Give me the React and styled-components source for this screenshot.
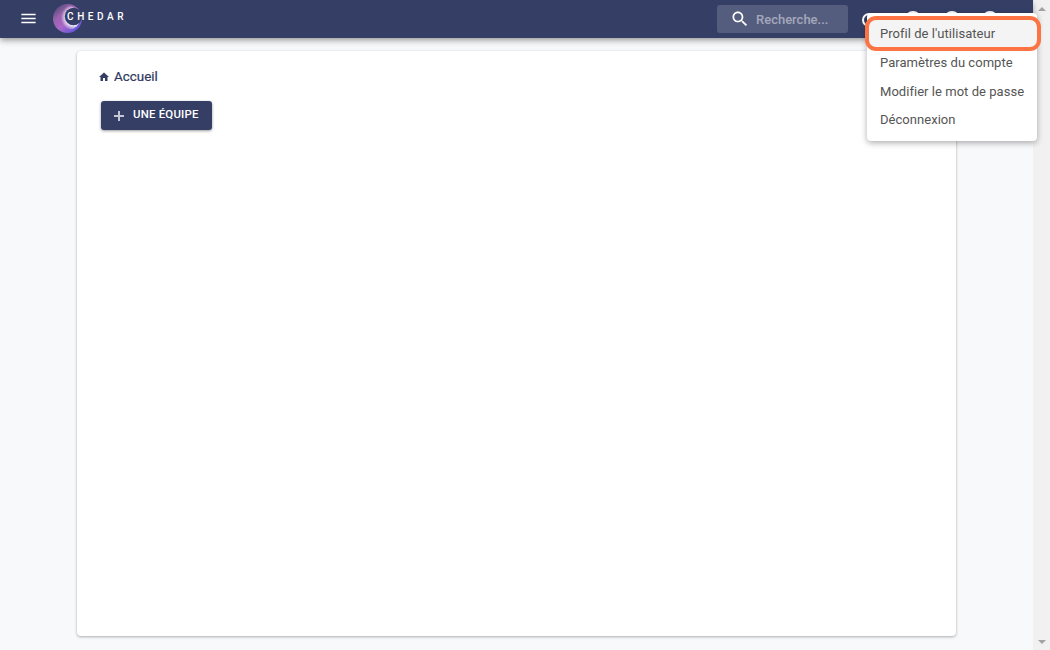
import React from 'react';
import styled, { createGlobalStyle } from 'styled-components';

const Global = createGlobalStyle`
  html, body { margin: 0; padding: 0; height: 100%; overflow: hidden; }
  body { font-family: Roboto, "Liberation Sans", sans-serif; background: #f8f9fb; }
`;

const Page = styled.div`
  position: relative;
  display: flex;
  width: 1050px;
  height: 650px;
  overflow: hidden;
`;
const Main = styled.div`
  flex: 1;
  display: flex;
  flex-direction: column;
  min-width: 0;
`;
const TopBar = styled.header`
  height: 38px;
  flex: none;
  display: flex;
  align-items: center;
  background: #353f66;
  box-shadow: 0 2px 4px -1px rgba(0,0,0,.2), 0 4px 5px 0 rgba(0,0,0,.14), 0 1px 10px 0 rgba(0,0,0,.12);
  padding: 0 0 0 19px;
  position: relative;
  z-index: 2;
`;
const Burger = styled.svg`
  width: 19px;
  height: 19px;
  fill: #fff;
  margin-right: 15px;
  margin-top: -2px;
  flex: none;
`;
const Brand = styled.div`
  display: flex;
  align-items: center;
  color: #fff;
  font-size: 10px;
  font-weight: 500;
  letter-spacing: 3.6px;
`;
const BrandName = styled.span`
  margin-left: -16px;
  margin-top: -6px;
`;
const Spacer = styled.div`flex: 1;`;
const SearchBox = styled.div`
  width: 131px;
  height: 28px;
  box-sizing: border-box;
  border-radius: 3px;
  background: rgba(255,255,255,.16);
  display: flex;
  align-items: center;
  padding-left: 13px;
  gap: 6px;
  color: #a3a8bb;
  font-size: 13px;
  font-weight: 500;
  margin-right: 14px;
`;
const SearchGlyph = styled.svg`
  width: 20px;
  height: 20px;
  fill: #fff;
  flex: none;
`;
const Round = styled.div`
  width: ${p => p.$size}px;
  height: ${p => p.$size}px;
  box-sizing: border-box;
  border: 2px solid #fff;
  border-radius: 50%;
  margin-right: ${p => p.$gap}px;
  margin-top: ${p => p.$drop || 0}px;
  flex: none;
`;
const Content = styled.main`
  flex: 1;
  padding: 13px 77px 14px;
  display: flex;
`;
const Card = styled.section`
  width: 879px;
  flex: none;
  background: #fff;
  border-radius: 4px;
  box-shadow: 0 1px 3px rgba(0,0,0,.3), 0 0 1px rgba(0,0,0,.08);
  padding: 18px 24px;
  box-sizing: border-box;
`;
const Crumb = styled.div`
  display: flex;
  align-items: center;
  gap: 4px;
  color: #2f3860;
  font-size: 13.4px;
  font-weight: 400;
  -webkit-text-stroke: .2px #2f3860;
  line-height: 16px;
  margin-left: -3px;
`;
const HomeGlyph = styled.svg`
  width: 12px;
  height: 12px;
  fill: #353f66;
  flex: none;
`;
const AddButton = styled.button`
  margin-top: 16px;
  width: 111px;
  height: 29px;
  display: flex;
  align-items: center;
  gap: 7px;
  padding: 0 0 3px 11px;
  border: 0;
  border-radius: 3px;
  background: #353f66;
  color: #fff;
  font: 500 11.4px Roboto, sans-serif;
  letter-spacing: .22px;
  box-shadow: 0 1px 3px rgba(0,0,0,.4);
`;
const PlusGlyph = styled.svg`
  width: 14px;
  height: 14px;
  stroke: #c5c8d4;
  stroke-width: 2;
  fill: none;
  flex: none;
  margin-top: 3px;
`;
const Scrollbar = styled.aside`
  width: 17px;
  flex: none;
  background: #f1f1f1;
  display: flex;
  flex-direction: column;
  justify-content: space-between;
  align-items: center;
  padding: 7px 0 6px;
  box-sizing: border-box;
`;
const Arrow = styled.div`
  width: 0;
  height: 0;
  border-left: 4px solid transparent;
  border-right: 4px solid transparent;
  ${p => p.$up ? 'border-bottom: 4px solid #a3a3a3;' : 'border-top: 4px solid #a3a3a3;'}
`;
const Dropdown = styled.nav`
  position: absolute;
  z-index: 5;
  left: 867px;
  top: 13px;
  width: 170px;
  height: 128px;
  box-sizing: border-box;
  padding: 6px 0 4px;
  background: #fff;
  border-radius: 4px;
  box-shadow: 0 2px 6px rgba(0,0,0,.32);
`;
const MenuItem = styled.div`
  height: 28.85px;
  padding-left: 13px;
  display: flex;
  align-items: center;
  font-size: 13px;
  letter-spacing: .04px;
  color: #555;
  white-space: nowrap;
  ${p => p.$active && 'background: #f4f4f4;'}
`;
const Highlight = styled.div`
  position: absolute;
  z-index: 6;
  left: 865px;
  top: 16px;
  width: 176px;
  height: 35px;
  box-sizing: border-box;
  border: 4px solid #fc7444;
  border-radius: 11px;
  pointer-events: none;
`;

function Logo() {
  return (
    <svg width="30" height="30" viewBox="0 0 30 30" style={{ flex: 'none', display: 'block' }}>
      <defs>
        <linearGradient id="lg" x1="0.1" y1="0.05" x2="0.85" y2="0.95">
          <stop offset="0" stopColor="#454a70" />
          <stop offset=".3" stopColor="#9a62ae" />
          <stop offset=".6" stopColor="#a868c8" />
          <stop offset="1" stopColor="#5850dc" />
        </linearGradient>
        <radialGradient id="lh" cx=".75" cy=".48" r=".55">
          <stop offset=".55" stopColor="#fff" />
          <stop offset="1" stopColor="#fff" stopOpacity="0" />
        </radialGradient>
      </defs>
      <circle cx="14.5" cy="14.5" r="14.5" fill="url(#lg)" />
      <circle cx="15" cy="14" r="12" fill="url(#lh)" />
      <circle cx="20.5" cy="12.5" r="8.7" fill="#353f66" />
    </svg>
  );
}

export default function App() {
  return (
    <Page>
      <Global />
      <Main>
        <TopBar>
          <Burger viewBox="0 0 24 24"><path d="M3 18h18v-2H3v2zm0-5h18v-2H3v2zm0-7v2h18V6H3z" /></Burger>
          <Brand><Logo /><BrandName>CHEDAR</BrandName></Brand>
          <Spacer />
          <SearchBox>
            <SearchGlyph viewBox="0 0 24 24"><path d="M15.5 14h-.79l-.28-.27C15.41 12.59 16 11.11 16 9.5 16 5.91 13.09 3 9.5 3S3 5.91 3 9.5 5.91 16 9.5 16c1.61 0 3.09-.59 4.23-1.57l.27.28v.79l5 4.99L20.49 19l-4.99-5zm-6 0C7.01 14 5 11.99 5 9.5S7.01 5 9.5 5 14 7.01 14 9.5 11.99 14 9.5 14z" /></SearchGlyph>
            Recherche...
          </SearchBox>
          <Round $size={14} $gap={29} $drop={2} />
          <Round $size={16} $gap={23} />
          <Round $size={16} $gap={22} />
          <Round $size={16} $gap={35} />
        </TopBar>
        <Content>
          <Card>
            <Crumb>
              <HomeGlyph viewBox="0 0 24 24"><path d="M10 20v-6h4v6h5v-8h3L12 3 2 12h3v8z" /></HomeGlyph>
              Accueil
            </Crumb>
            <AddButton>
              <PlusGlyph viewBox="0 0 14 14"><path d="M7 2v10M2 7h10" /></PlusGlyph>
              UNE ÉQUIPE
            </AddButton>
          </Card>
        </Content>
      </Main>
      <Scrollbar><Arrow $up /><Arrow /></Scrollbar>
      <Dropdown>
        <MenuItem $active>Profil de l'utilisateur</MenuItem>
        <MenuItem>Paramètres du compte</MenuItem>
        <MenuItem>Modifier le mot de passe</MenuItem>
        <MenuItem>Déconnexion</MenuItem>
      </Dropdown>
      <Highlight />
    </Page>
  );
}
